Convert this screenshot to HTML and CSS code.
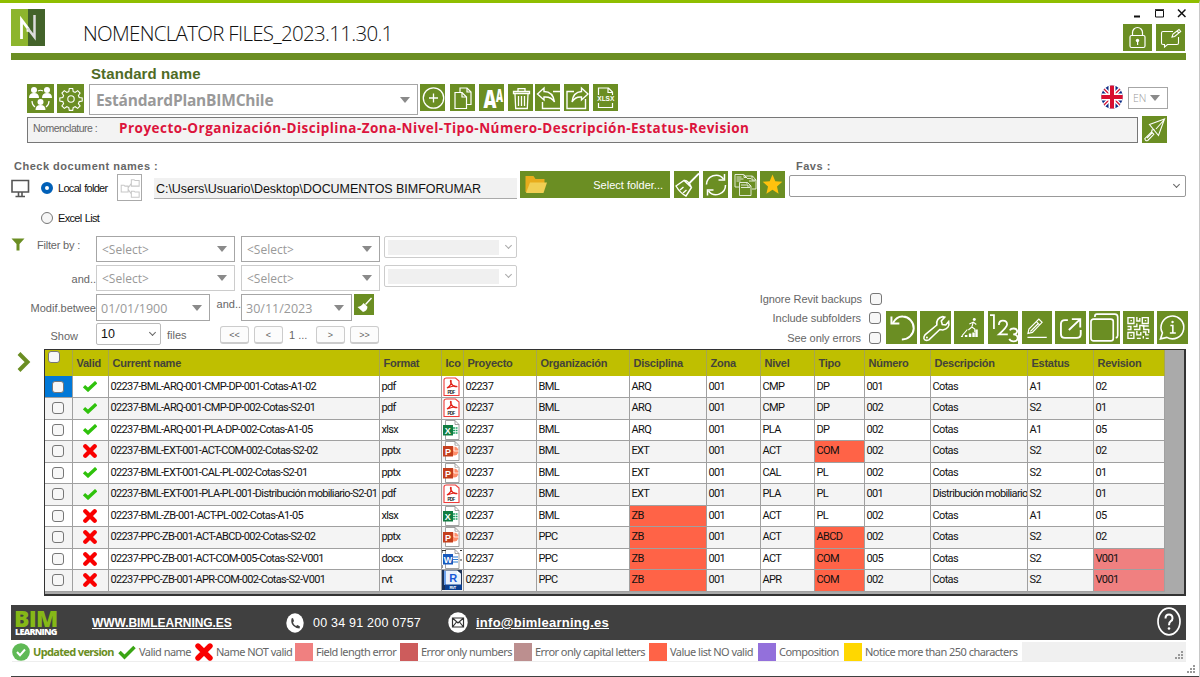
FILE: index.html
```html
<!DOCTYPE html>
<html lang="en">
<head>
    <meta charset="UTF-8">
    <meta name="viewport" content="width=device-width, initial-scale=1.0">
    <title>Nomenclator Files</title>
    <link rel="stylesheet" href="styles.css">
</head>
<body>
    <svg class="sprite" width="0" height="0">
        <symbol id="i-team" viewBox="0 0 27 29">
            <g fill="#fff"><circle cx="7" cy="6" r="3"/><path d="M2 14q0-5 5-5t5 5z"/><circle cx="20" cy="6" r="3"/><path d="M15 14q0-5 5-5t5 5z"/><circle cx="13.500" cy="18" r="3"/><path d="M8.500 26q0-5 5-5t5 5z"/></g>
            <path d="M11 7q2.500-1.500 5 0M5 17q0 4 3 6M22 17q0 4-3 6" fill="none" stroke="#fff" stroke-width="1.200"/>
        </symbol>
        <symbol id="i-gear" viewBox="0 0 27 29">
            <g fill="none" stroke="#fff" stroke-width="1.100"><circle cx="14" cy="15" r="3.200"/>
            <path d="M12.300 4.500h3.400l.5 3 2 .9 2.500-1.800 2.400 2.400-1.700 2.500.8 2 3 .5v3l-3 .6-.8 2 1.700 2.400-2.400 2.400-2.500-1.700-2 .9-.5 2.800h-3.400l-.5-2.800-2-.9-2.500 1.700-2.400-2.400 1.700-2.400-.8-2-3-.6v-3l3-.5.8-2-1.700-2.500 2.400-2.400 2.500 1.800 2-.9z"/></g>
        </symbol>
        <symbol id="i-plus" viewBox="0 0 25 27">
            <g fill="none" stroke="#fff" stroke-width="1.300"><circle cx="13.500" cy="14" r="10.200"/><path d="M13.500 9.500v9M9 14h9"/></g>
        </symbol>
        <symbol id="i-copy" viewBox="0 0 25 27">
            <g fill="none" stroke="#fff" stroke-width="1.200"><path d="M10 8.500V4h7l4 4v12.500h-4"/><path d="M17 4v4h4"/><path d="M5 8.500h7l4.500 4.500v11.500H5z"/><path d="M12 8.500V13h4.500"/></g>
        </symbol>
        <symbol id="i-font" viewBox="0 0 25 27">
            <text x="4.500" y="23.500" class="glyph-big" textLength="13" lengthAdjust="spacingAndGlyphs">A</text><text x="17" y="17.500" class="glyph-small" textLength="7" lengthAdjust="spacingAndGlyphs">A</text>
        </symbol>
        <symbol id="i-trash" viewBox="0 0 25 27">
            <g fill="none" stroke="#fff" stroke-width="1.300"><path d="M5.500 7.500h16v2h-16zM10 7V4.700h7V7M7 10l.7 14.500h11.600L20 10"/><path d="M10.500 12v10M13.500 12v10M16.500 12v10"/></g>
        </symbol>
        <symbol id="i-import" viewBox="0 0 25 27">
            <g fill="none" stroke="#fff" stroke-width="1.400"><path d="M2.500 10 9 4v3.500q9 0 10.500 10.500-3-5.500-10.500-5V16z"/><path d="M18 7.500h7M7.500 18v6.500H25"/></g>
        </symbol>
        <symbol id="i-export" viewBox="0 0 25 27">
            <g fill="none" stroke="#fff" stroke-width="1.400"><path d="M24 10 17.500 4v3.500Q9 8 8 18q3-5.500 9.500-5V16z"/><path d="M10 7.500H3v17h18.500V15"/></g>
        </symbol>
        <symbol id="i-xlsx" viewBox="0 0 25 27">
            <path d="M5.500 11V4h10l4 4v3M5.500 19v4.500h14V19M15 4v4.500h4.500" fill="none" stroke="#fff" stroke-width="1.200"/>
            <text x="4.300" y="17.200" class="glyph-xlsx">XLSX</text>
        </symbol>
        <symbol id="i-trowel" viewBox="0 0 25 27">
            <g fill="none" stroke="#fff" stroke-width="1.100"><path d="M22.500 3 7.500 8.500l9 11zM12.500 13.500l-2.500.5-.5 3M22 4l-8 9"/><path d="m9.500 16 2.300 2.300-6 6.200q-2.500.8-3-1.800z"/><path d="m5 22 5-5"/></g>
        </symbol>
        <symbol id="i-tree" viewBox="0 0 25 27">
            <g fill="none" stroke="#c8c8c8" stroke-width="1.100"><path d="M3.500 11h3l1 1H11v6.500H3.500zM14.500 5h3l1 1H23v6h-8.500zM14.500 17.500h3l1 1H23v5.500h-8.500zM11 14l3.500-5M11 15.500l3.500 5"/></g>
        </symbol>
        <symbol id="i-broom" viewBox="0 0 25 27">
            <g fill="none" stroke="#fff" stroke-width="1.400"><path d="M25 2.500 14.500 13" stroke-width="1.800"/><path d="M10 9.500q4-1 7.500 7M2 15l8-5.500 7.500 7-5.500 8.500q-6-3-10-10z"/><path d="m6 19 3.500-3M9 22l3.500-3"/></g>
        </symbol>
        <symbol id="i-refresh" viewBox="0 0 25 27">
            <g fill="none" stroke="#fff" stroke-width="1.500"><path d="M3.500 13.500A9.500 9.500 0 0 1 20.500 8M22.500 14A9.500 9.500 0 0 1 5.500 20"/><path d="M21.500 3v6h-6M4.500 24.500V19h6"/></g>
        </symbol>
        <symbol id="i-files" viewBox="0 0 25 27">
            <g fill="none" stroke="#fff" stroke-width=".8"><path d="M7 16H3V3.500h8.500l3 3M12 3.500v3h3M13 5h7.500l3.500 4v9h-4M20 5v4h4"/><path d="M7.500 11.500h8l3.500 3.500v9.500H7.500z" fill="#6b8e23"/><path d="M15 11.500V15h4M4.500 6h5M4.500 8h7M4.500 10h4M15 7.500h4M17 10h6M9 14h5M9 16.500h9"/></g>
        </symbol>
        <symbol id="i-star" viewBox="0 0 25 27">
            <path d="m12.500 3.500 2.800 6.700 7 .6-5.300 4.700 1.600 7.200-6.100-3.900-6.100 3.900L8 15.500l-5.300-4.700 7-.6z" fill="#ffc20e"/>
        </symbol>
        <symbol id="i-sweep" viewBox="0 0 20 21">
            <path d="m17.500 4-6 6.500" stroke="#fff" stroke-width="1.400"/><path d="m9.500 9 4 3.800q-.3 4.200-4.500 5.200L3.500 13q4-.5 6-4z" fill="#fff"/>
        </symbol>
        <symbol id="i-lock" viewBox="0 0 29 27">
            <g fill="none" stroke="#fff" stroke-width="1.200"><rect x="7" y="11.500" width="15" height="12" rx="1.500"/><path d="M9.500 11.500V8.500a5 5 0 0 1 10 0v3"/></g><circle cx="14.500" cy="16.500" r="1.700" fill="#fff"/><path d="M14 17h1.200v4H14z" fill="#fff"/>
        </symbol>
        <symbol id="i-comment" viewBox="0 0 29 27">
            <g fill="none" stroke="#fff" stroke-width="1.100"><path d="M17 7.500H7Q5.500 7.500 5.500 9v10q0 1.500 1.500 1.500h1.500V23l3-2.500H21q1.500 0 1.500-1.500v-6"/><path d="m16 13 1-3 6-4.500 1.700 2-6 5zM21 7l2 2"/></g>
        </symbol>
        <symbol id="i-undo" viewBox="0 0 31 33">
            <path d="M7 12Q11 5 17 5.500A11.500 11.500 0 0 1 16 28.500" fill="none" stroke="#fff" stroke-width="2"/><path d="M5.500 5.500v7h8" fill="none" stroke="#fff" stroke-width="2"/>
        </symbol>
        <symbol id="i-wrench" viewBox="0 0 31 33">
            <path d="M5 24 17 14Q16 7 23 5.500l2 .5-3.500 4 1 3.500 3.500.5 3-3.500q1.500 7-6 8.500l-3-.5L9 29q-4 1.500-5-1.500-.3-2 1-3.500z" fill="none" stroke="#fff" stroke-width="1.600"/><circle cx="7" cy="26.500" r="1" fill="#fff"/>
        </symbol>
        <symbol id="i-career" viewBox="0 0 31 33">
            <circle cx="20.500" cy="8.500" r="1.500" fill="#fff"/><path d="m15.500 13 4-2 3 2.500M19.500 11l-1.500 5 3 2v3M18 16l-3.500 3M8 25l5.500-6.500" fill="none" stroke="#fff" stroke-width="1.100"/><path d="M11 24h2.500v2H11zm4-1.500h2.500V26H15zm3.500-1H21V26h-2.500zm3-3H24V26h-2.500zM7 25h2v1H7z" fill="#fff"/>
        </symbol>
        <symbol id="i-123" viewBox="0 0 31 33">
            <path d="M2 4h4v14M11 14q0-4.500 4-4.500 4.300 0 4.300 4 0 2.500-8.300 10H20M22 19.500q1-2 4-2t3.500 2.500q0 3-4 3.500 4.500 0 4.500 4-.5 3-4 3t-4.500-2.500" fill="none" stroke="#fff" stroke-width="1.800"/>
        </symbol>
        <symbol id="i-edit" viewBox="0 0 31 33">
            <g fill="none" stroke="#fff" stroke-width="1.200"><path d="m6 22.500 1-4.500L17 8l3.300 3.300L10.500 21.500zM14.500 10.500l3.300 3.300M8.500 20.500l8-8"/><path d="M5.500 26.500H25"/></g>
        </symbol>
        <symbol id="i-open" viewBox="0 0 31 33">
            <path d="M13 9H10q-4 0-4 4v10q0 4 4 4h12q4 0 4-4v-4M17 8h8.500v8.500M25 8.500 14 19" fill="none" stroke="#fff" stroke-width="1.900"/>
        </symbol>
        <symbol id="i-stack" viewBox="0 0 31 33">
            <g fill="none" stroke="#fff" stroke-width="1.700"><rect x="2" y="8" width="22.500" height="22" rx="2.500"/><path d="M6 6V5q0-2 2-2h18q3 0 3 3v18.500q0 2-2 2.500"/></g>
        </symbol>
        <symbol id="i-qr" viewBox="0 0 31 33">
            <g fill="none" stroke="#fff" stroke-width="1.400"><path d="M5 6.500h6v6H5zM19.500 6.500h6v6h-6zM5 21.500h6v6H5z"/><path d="M7.500 9.500h1.500M22 9.500h1.500M7.500 24.500H9M14 6v4h3V7M14 12.500v3h-3.500M4.500 15.500H8v3H4.500M11 18.500h6v-4h4v4h5M19.500 15h6.500M14 20v4h4v-3M14 27.500h4M20 21h3v3h3M20.500 27.500V25M23 27.500h3M26 18v4"/></g>
        </symbol>
        <symbol id="i-info" viewBox="0 0 31 33">
            <path d="M5.500 22A11.500 11.500 0 1 1 10 26.500L3.500 28z" fill="none" stroke="#fff" stroke-width="1.600"/><path d="M13.500 14.500H16V22m-3 0h6" fill="none" stroke="#fff" stroke-width="1.600"/><circle cx="15.700" cy="11" r="1.200" fill="#fff"/>
        </symbol>
        <symbol id="i-check" viewBox="0 0 14 11"><path d="m1 5.200 4 3.600 8.200-7.600" fill="none" stroke="#2fc20c" stroke-width="3.400"/></symbol>
        <symbol id="i-cross" viewBox="0 0 14 14"><path d="m2.300 2.300 9.400 9.400M11.700 2.300l-9.400 9.400" fill="none" stroke="#f90000" stroke-width="4.300" stroke-linecap="round"/></symbol>
        <symbol id="i-pdf" viewBox="0 0 20 20">
            <path d="M4.500 1h9L17 4v14.500H2V3q0-2 2.500-2z" fill="#fff" stroke="#ef3b39" stroke-width="1.100"/><path d="M5 11q5-3 4-7.500Q8 3 9 6q2 4 5.500 3.500Q13 8 5 11z" fill="none" stroke="#e2231a" stroke-width="1.300"/><text x="5.500" y="16.800" class="glyph-tag">PDF</text>
        </symbol>
        <symbol id="i-paper" viewBox="0 0 20 20"><path d="M3.500.5H13l4 4v15H3.500zM13 .5v4h4" fill="#fff" stroke="#8a8a8a" stroke-width=".8"/></symbol>
        <symbol id="i-xls" viewBox="0 0 20 20"><use href="#i-paper"/><path d="M11 8h4.500M11 10.500h4.500M11 13h4.500" stroke="#21a366" stroke-width="1.400" stroke-dasharray="2 .6"/><path d="M1 5h10v10.500H1z" fill="#107c41"/><text x="2.700" y="13.500" class="glyph-doc">X</text></symbol>
        <symbol id="i-ppt" viewBox="0 0 20 20"><use href="#i-paper"/><circle cx="12" cy="10" r="4.500" fill="#ff8f6b"/><path d="M12 10V5h5M12 10h5" fill="none" stroke="#fff" stroke-width=".8"/><path d="M1 5h10v10.500H1z" fill="#c43e1c"/><text x="3" y="13.500" class="glyph-doc">P</text></symbol>
        <symbol id="i-doc" viewBox="0 0 20 20"><use href="#i-paper"/><path d="M11 8h5M11 10.500h5M11 13h5" stroke="#2b7cd3" stroke-width="1"/><path d="M1 5h10v10.500H1z" fill="#185abd"/><text x="1.700" y="13.500" class="glyph-doc">W</text><path d="M0 1.500h4M0 2v2M0 16v3M18 1.500h2M18 11h2" stroke="#333" stroke-width="1"/></symbol>
        <symbol id="i-rvt" viewBox="0 0 20 20"><path d="M0 0h20v20H0z" fill="#1c3358"/><path d="M2 .5h13L19 4v11H2z" fill="#e9f1fc"/><path d="M15 .5 19 4h-4z" fill="#fff"/><path d="M2 1h2v14H2z" fill="#6ea3ee"/><path d="M3 14.500h17V20H3z" fill="#0b3f91"/><text x="7.200" y="11.800" class="glyph-rvt">R</text><text x="7.500" y="18.700" class="glyph-rvt-tag">RVT</text></symbol>
        <symbol id="i-grip" viewBox="0 0 10 10"><path d="M7 1h2v2H7zM4 4h2v2H4zM7 4h2v2H7zM1 7h2v2H1zM4 7h2v2H4zM7 7h2v2H7z" fill="#999"/></symbol>
    </svg>

    <div class="window">
        <header class="titlebar">
            <svg class="logo" viewBox="0 0 34 37"><path d="M0 0h17v37H0z" fill="#8db52d"/><path d="M17 0h17v37H17z" fill="#43632a"/><path d="M10.500 30V11L17 19.500v3.300" fill="none" stroke="#fff" stroke-width="2.800"/><path d="M16.500 19 23.500 28V6" fill="none" stroke="#dcdcdc" stroke-width="2.500"/></svg>
            <h1>NOMENCLATOR FILES_2023.11.30.1</h1>
            <div class="title-right">
                <div class="win-controls">
                    <svg viewBox="0 0 54 12" width="54" height="12"><path d="M2 9.500h6" stroke="#111" stroke-width="2"/><path d="M23.500 3.500h8v6.500h-8zM23 2.700h9" fill="none" stroke="#111"/><path d="m46 2.500 7.500 7.500M53.500 2.500 46 10" stroke="#111" stroke-width="1.500"/></svg>
                </div>
                <div class="title-buttons">
                    <button class="ico wide"><svg><use href="#i-lock"/></svg></button>
                    <button class="ico wide"><svg><use href="#i-comment"/></svg></button>
                </div>
            </div>
        </header>

        <section class="standard">
            <h2>Standard name</h2>
            <div class="standard-row">
                <button class="ico tall"><svg><use href="#i-team"/></svg></button>
                <button class="ico tall"><svg><use href="#i-gear"/></svg></button>
                <div class="combo standard-combo"><span>EstándardPlanBIMChile</span><i class="tri"></i></div>
                <div class="tools">
                    <button class="ico"><svg><use href="#i-plus"/></svg></button>
                    <button class="ico"><svg><use href="#i-copy"/></svg></button>
                    <button class="ico"><svg><use href="#i-font"/></svg></button>
                    <button class="ico"><svg><use href="#i-trash"/></svg></button>
                    <button class="ico"><svg><use href="#i-import"/></svg></button>
                    <button class="ico"><svg><use href="#i-export"/></svg></button>
                    <button class="ico"><svg><use href="#i-xlsx"/></svg></button>
                </div>
                <svg class="flag" viewBox="0 0 22 24">
                    <clipPath id="round"><ellipse cx="11" cy="12" rx="10.700" ry="11.500"/></clipPath>
                    <g clip-path="url(#round)"><path d="M0 0h22v24H0z" fill="#0a2a84"/><path d="m0 1 22 22M22 1 0 23" stroke="#fff" stroke-width="4"/><path d="m0 1 22 22M22 1 0 23" stroke="#d80f30" stroke-width="1.300"/><path d="M11 0v24M0 12h22" stroke="#fff" stroke-width="7"/><path d="M11 0v24M0 12h22" stroke="#d80f30" stroke-width="4"/></g>
                </svg>
                <div class="combo lang"><span>EN</span><i class="tri"></i></div>
            </div>
            <div class="nomen-row">
                <div class="nomen"><label>Nomenclature :</label><strong>Proyecto-Organización-Disciplina-Zona-Nivel-Tipo-Número-Descripción-Estatus-Revision</strong></div>
                <button class="ico"><svg><use href="#i-trowel"/></svg></button>
            </div>
        </section>

        <section class="source">
            <div class="source-labels"><b class="lbl-check">Check document names :</b><b class="lbl-favs">Favs :</b></div>
            <div class="source-row">
                <svg class="monitor" viewBox="0 0 19 19"><path d="M1 1.500h16.500V13H1zM7.500 13v4M11 13v4M4.500 17.500H14" fill="none" stroke="#555" stroke-width="1.600"/></svg>
                <label class="radio local"><i class="dot on"></i><span>Local folder</span></label>
                <button class="tree"><svg><use href="#i-tree"/></svg></button>
                <div class="path">C:\Users\Usuario\Desktop\DOCUMENTOS BIMFORUMAR</div>
                <button class="folder-btn">
                    <svg viewBox="0 0 22 20" width="22" height="20"><path d="M.5 1h8l2 3h9v4l-3 9H.5z" fill="#e8ac1c"/><path d="M5 7.500h17L18.500 18H1z" fill="#f1cf53"/></svg>
                    <span>Select folder...</span>
                </button>
                <div class="source-tools">
                    <button class="ico"><svg><use href="#i-broom"/></svg></button>
                    <button class="ico"><svg><use href="#i-refresh"/></svg></button>
                    <button class="ico"><svg><use href="#i-files"/></svg></button>
                    <button class="ico"><svg><use href="#i-star"/></svg></button>
                </div>
                <div class="native favs"><i class="chev"></i></div>
            </div>
            <label class="radio excel"><i class="dot"></i><span>Excel List</span></label>
        </section>

        <section class="controls">
            <div class="filters">
                <svg class="funnel" viewBox="0 0 14 13"><path d="M.5.500h13L8.500 6v6.500H5.500V6z" fill="#6b8e23"/></svg>
                <div class="f-row">
                    <label class="w1">Filter by :</label>
                    <div class="combo sel"><span>&lt;Select&gt;</span><i class="tri"></i></div>
                    <div class="combo sel"><span>&lt;Select&gt;</span><i class="tri"></i></div>
                    <div class="native off"><i class="chev"></i></div>
                </div>
                <div class="f-row second">
                    <label class="w2">and..</label>
                    <div class="combo sel pale"><span>&lt;Select&gt;</span><i class="tri"></i></div>
                    <div class="combo sel pale"><span>&lt;Select&gt;</span><i class="tri"></i></div>
                    <div class="native off"><i class="chev"></i></div>
                </div>
                <div class="f-row dates">
                    <label class="w3">Modif.betwee</label>
                    <div class="combo date from"><span>01/01/1900</span><i class="tri"></i></div>
                    <label class="between">and..</label>
                    <div class="combo date to"><span>30/11/2023</span><i class="tri"></i></div>
                    <button class="sweep"><svg><use href="#i-sweep"/></svg></button>
                </div>
                <div class="f-row paging">
                    <label class="w4">Show</label>
                    <div class="native count"><span>10</span><i class="chev"></i></div>
                    <span class="files">files</span>
                    <button class="pg">&lt;&lt;</button>
                    <button class="pg">&lt;</button>
                    <span class="page">1 ...</span>
                    <button class="pg">&gt;</button>
                    <button class="pg">&gt;&gt;</button>
                </div>
            </div>
            <div class="options">
                <label>Ignore Revit backups<i class="box"></i></label>
                <label>Include subfolders<i class="box"></i></label>
                <label>See only errors<i class="box"></i></label>
            </div>
            <div class="actions">
                <button class="big"><svg><use href="#i-undo"/></svg></button>
                <button class="big"><svg><use href="#i-wrench"/></svg></button>
                <button class="big"><svg><use href="#i-career"/></svg></button>
                <button class="big"><svg><use href="#i-123"/></svg></button>
                <button class="big"><svg><use href="#i-edit"/></svg></button>
                <button class="big"><svg><use href="#i-open"/></svg></button>
                <button class="big"><svg><use href="#i-stack"/></svg></button>
                <button class="big"><svg><use href="#i-qr"/></svg></button>
                <button class="big"><svg><use href="#i-info"/></svg></button>
            </div>
        </section>

        <section class="results">
            <svg class="expand" viewBox="0 0 14 22"><path d="m2 2.500 8.500 8.500L2 19.500" fill="none" stroke="#6b8e23" stroke-width="4"/></svg>
            <div class="grid-box">
                <table id="files-table">
                    <colgroup>
                        <col class="c-sel"><col class="c-valid"><col class="c-name"><col class="c-format"><col class="c-ico"><col class="c-proy"><col class="c-org"><col class="c-disc"><col class="c-zona"><col class="c-nivel"><col class="c-tipo"><col class="c-num"><col class="c-desc"><col class="c-est"><col class="c-rev">
                    </colgroup>
                    <thead>
                        <tr>
                            <th class="sel-all"><i class="box"></i></th>
                            <th>Valid</th><th>Current name</th><th>Format</th><th>Ico</th><th>Proyecto</th><th>Organización</th><th>Disciplina</th><th>Zona</th><th>Nivel</th><th>Tipo</th><th>Número</th><th>Descripción</th><th>Estatus</th><th>Revision</th>
                        </tr>
                    </thead>
                    <tbody></tbody>
                </table>
            </div>
        </section>

        <footer class="contact">
            <div class="brand"><b>BIM</b><span>LEARNING</span></div>
            <a class="site">WWW.BIMLEARNING.ES</a>
            <svg class="round" viewBox="0 0 18 20"><ellipse cx="9" cy="10" rx="8.700" ry="9.700" fill="#fff"/><path d="M5.500 5.500q-1 5 2 7.500t6 2.500l.5-2-2.500-1.500-1.500 1q-2.500-1.500-3-3.500l1-1.500-1-3z" fill="#404040"/></svg>
            <span class="phone">00 34 91 200 0757</span>
            <svg class="round mail" viewBox="0 0 20 21"><ellipse cx="10" cy="10.500" rx="9.700" ry="10.200" fill="#fff"/><path d="M4.500 6h11v9h-11zl5.500 5 5.500-5M4.500 15l4-5M15.500 15l-4-5" fill="none" stroke="#333" stroke-width="1.200"/></svg>
            <a class="email">info@bimlearning.es</a>
            <svg class="help" viewBox="0 0 24 29"><ellipse cx="12" cy="14.500" rx="11" ry="13.300" fill="none" stroke="#fff" stroke-width="1.700"/><path d="M8.500 11.500q0-4 3.500-4t3.500 3.700q0 2-1.700 3-1.800 1.200-1.800 4" fill="none" stroke="#fff" stroke-width="2"/><circle cx="12" cy="21.500" r="1.300" fill="#fff"/></svg>
        </footer>

        <div class="legend">
            <div class="key updated"><svg viewBox="0 0 18 18"><circle cx="9" cy="9" r="8.800" fill="#5fb955"/><path d="m5 9 3 3.200L13 6.500" fill="none" stroke="#fff" stroke-width="2"/></svg>Updated version</div>
            <div class="key"><svg viewBox="0 0 18 18"><path d="m1.500 9 5 5L16.500 4" fill="none" stroke="#3aa514" stroke-width="3.500"/></svg>Valid name</div>
            <div class="key"><svg viewBox="0 0 18 18"><path d="m3 3 12 12M15 3 3 15" stroke="#f90000" stroke-width="5.400" stroke-linecap="round"/></svg>Name NOT valid</div>
            <div class="key"><i class="length"></i>Field length error</div>
            <div class="key"><i class="numbers"></i>Error only numbers</div>
            <div class="key"><i class="capitals"></i>Error only capital letters</div>
            <div class="key"><i class="list"></i>Value list NO valid</div>
            <div class="key"><i class="composition"></i>Composition</div>
            <div class="key"><i class="notice"></i>Notice more than 250 characters</div>
            <div class="rest"><svg class="grip"><use href="#i-grip"/></svg></div>
        </div>
        <div class="bottom"><svg class="grip"><use href="#i-grip"/></svg></div>
    </div>

    <script>
        const icons = { pdf: 'i-pdf', xlsx: 'i-xls', pptx: 'i-ppt', docx: 'i-doc', rvt: 'i-rvt' };

        // valid, format, file name, then the name fields; "!" = value not in list, "#" = wrong length
        const files = [
            [1, 'pdf', '02237-BML-ARQ-001-CMP-DP-001-Cotas-A1-02', '02237|BML|ARQ|001|CMP|DP|001|Cotas|A1|02'],
            [1, 'pdf', '02237-BML-ARQ-001-CMP-DP-002-Cotas-S2-01', '02237|BML|ARQ|001|CMP|DP|002|Cotas|S2|01'],
            [1, 'xlsx', '02237-BML-ARQ-001-PLA-DP-002-Cotas-A1-05', '02237|BML|ARQ|001|PLA|DP|002|Cotas|A1|05'],
            [0, 'pptx', '02237-BML-EXT-001-ACT-COM-002-Cotas-S2-02', '02237|BML|EXT|001|ACT|!COM|002|Cotas|S2|02'],
            [1, 'pptx', '02237-BML-EXT-001-CAL-PL-002-Cotas-S2-01', '02237|BML|EXT|001|CAL|PL|002|Cotas|S2|01'],
            [1, 'pdf', '02237-BML-EXT-001-PLA-PL-001-Distribución mobiliario-S2-01', '02237|BML|EXT|001|PLA|PL|001|Distribución mobiliario|S2|01'],
            [0, 'xlsx', '02237-BML-ZB-001-ACT-PL-002-Cotas-A1-05', '02237|BML|!ZB|001|ACT|PL|002|Cotas|A1|05'],
            [0, 'pptx', '02237-PPC-ZB-001-ACT-ABCD-002-Cotas-S2-02', '02237|PPC|!ZB|001|ACT|!ABCD|002|Cotas|S2|02'],
            [0, 'docx', '02237-PPC-ZB-001-ACT-COM-005-Cotas-S2-V001', '02237|PPC|!ZB|001|ACT|!COM|005|Cotas|S2|#V001'],
            [0, 'rvt', '02237-PPC-ZB-001-APR-COM-002-Cotas-S2-V001', '02237|PPC|!ZB|001|APR|!COM|002|Cotas|S2|#V001']
        ];

        const tbody = document.querySelector('#files-table tbody');
        files.forEach(([valid, format, name, fields], i) => {
            const row = tbody.insertRow();
            const mark = valid ? 'check' : 'cross';
            const cells = fields.split('|').map(f => {
                const cls = f[0] === '!' ? 'bad-list' : f[0] === '#' ? 'bad-length' : '';
                return `<td class="${cls}">${f.replace(/^[!#]/, '')}</td>`;
            });
            row.innerHTML = `<td class="pick${i === 0 ? ' current' : ''}"><i class="box"></i></td>
                <td class="mark"><svg class="${mark}"><use href="#i-${mark}"/></svg></td>
                <td>${name}</td><td>${format}</td>
                <td class="type"><svg><use href="#${icons[format]}"/></svg></td>` + cells.join('');
        });
    </script>
</body>
</html>
```
FILE: styles.css
```css
* { box-sizing: border-box; }
body { margin: 0; background: #fff; color: #666; font-family: "Liberation Sans", Arial, sans-serif; font-size: 11px; overflow: hidden; }
h1, h2 { margin: 0; }
button { padding: 0; border: none; font: inherit; color: inherit; }
svg { display: block; }
i { font-style: normal; }
.sprite { display: none; }
.window { width: 1200px; height: 677px; border-top: 3px solid #8fbe00; border-right: 1px solid #c8c8c8; display: flex; flex-direction: column; }

/* icon buttons */
.ico { flex: none; width: 25px; height: 27px; background: #6b8e23; }
.ico.tall { width: 27px; height: 29px; }
.ico.wide { width: 29px; }
.ico svg, .tree svg, .sweep svg, .big svg { width: 100%; height: 100%; }
.glyph-big { font: 800 24px "Open Sans", sans-serif; fill: #fff; }
.glyph-small { font: 800 17px "Open Sans", sans-serif; fill: #fff; }
.glyph-xlsx { font: bold 6.5px "Liberation Sans", sans-serif; fill: #fff; }
.glyph-tag { font: bold 4.5px "Liberation Sans", sans-serif; fill: #222; }
.glyph-doc { font: bold 9px "Liberation Sans", sans-serif; fill: #fff; }
.glyph-rvt { font: bold 11px "Liberation Sans", sans-serif; fill: #1858d6; }
.glyph-rvt-tag { font: bold 4px "Liberation Sans", sans-serif; fill: #fff; }

/* title */
.titlebar { height: 57px; margin: 0 13px 0 11px; border-bottom: 7px solid #6b8e23; display: flex; }
.logo { width: 34px; height: 37px; margin-top: 6px; }
h1 { margin: 16px 0 0 38px; font: 300 20.5px/28px "Open Sans", sans-serif; color: #111; letter-spacing: -0.7px; }
.title-right { margin-left: auto; }
.win-controls { height: 21px; padding: 4px 0 0 9px; }
.title-buttons { display: flex; gap: 4px; }

/* combos */
.combo { border: 1px solid #a6a6a6; background: #fff; display: flex; align-items: center; justify-content: space-between; color: #999; font-family: "Open Sans", sans-serif; }
.tri { border: 5px solid transparent; border-top: 6px solid #8a8a8a; border-bottom: 0; }
.native { border: 1px solid #999; border-radius: 2px; background: #fff; display: flex; align-items: center; justify-content: flex-end; }
.chev { width: 5px; height: 5px; border: solid #666; border-width: 0 1px 1px 0; transform: rotate(45deg); margin: -3px 6px 0 0; }

/* standard */
.standard { height: 84px; padding: 5px 0 0 27px; }
h2 { height: 19px; margin-left: 64px; font: bold 15px/17px "Liberation Sans", sans-serif; color: #4f6b25; letter-spacing: .1px; }
.standard-row { display: flex; height: 33px; }
.standard-row .tall + .tall { margin-left: 3px; }
.standard-combo { width: 329px; height: 31px; margin-left: 5px; padding: 0 7px 0 6px; font-weight: bold; font-size: 15.5px; letter-spacing: -0.2px; }
.tools { display: flex; margin-left: 2px; gap: 4px; }
.tools .ico:nth-child(2) { margin-left: 1px; }
.tools .ico:nth-child(5) { margin-left: -2px; }
.flag { width: 22px; height: 24px; margin: 1px 0 0 483px; }
.lang { width: 40px; height: 22px; margin: 3px 0 0 5px; padding: 0 7px 0 4px; font-size: 10.5px; font-weight: 300; }
.nomen-row { display: flex; gap: 4px; }
.nomen { width: 1111px; height: 26px; border: 1px solid #777; background: #f3f3f3; display: flex; line-height: 20px; }
.nomen label { width: 86px; margin-left: 5px; font-size: 10.5px; letter-spacing: -0.5px; }
.nomen strong { font: bold 13.5px/21px "Open Sans", sans-serif; color: #dc143c; letter-spacing: .47px; }
.nomen-row .ico { margin-top: -1px; }

/* source */
.source { height: 85px; padding-top: 15px; color: #111; }
.source-labels { display: flex; height: 12px; font-size: 11px; line-height: 14px; color: #666; letter-spacing: .5px; }
.lbl-check { width: 782px; margin-left: 14px; }
.source-row { display: flex; height: 32px; }
.monitor { width: 19px; height: 19px; margin: 8px 0 0 11px; }
.radio { display: flex; align-items: center; gap: 5px; font-size: 11px; letter-spacing: -0.7px; word-spacing: 1px; }
.dot { width: 12px; height: 12px; border: 1px solid #777; border-radius: 50%; background: #f6f6f6; }
.dot.on { border: 4px solid #0060b8; background: #fff; }
.local { width: 76px; height: 20px; margin: 7px 0 0 11px; }
.excel { margin: 5px 0 0 41px; height: 20px; }
.tree { width: 25px; height: 27px; margin-top: 3px; background: #fff; border: 1px solid #aaa; }
.path { width: 363px; height: 21px; margin: 7px 0 0 12px; padding-left: 2px; background: #f1f1f1; border: solid #aaa; border-width: 0 0 1px; font-size: 12.5px; letter-spacing: -0.04px; line-height: 22px; white-space: nowrap; }
.folder-btn { width: 150px; height: 27px; margin-left: 3px; padding: 0 7px 0 5px; background: #6b8e23; color: #fff; display: flex; align-items: center; justify-content: space-between; font-size: 11px; }
.source-tools { display: flex; gap: 3.800px; margin-left: 4px; }
.favs { width: 397px; height: 22px; margin: 4px 0 0 4px; }

/* filters */
.controls { height: 120px; padding-top: 7px; display: flex; color: #666; }
.filters { width: 520px; position: relative; }
.funnel { position: absolute; left: 11px; top: 2px; width: 14px; height: 13px; }
.f-row { display: flex; height: 29px; }
.f-row label { text-align: right; flex: none; }
.w1 { width: 96px; padding: 3px 16px 0 0; letter-spacing: -0.2px; }
.f-row .w2 { width: 96px; padding-top: 8px; }
.f-row .w3 { width: 96px; padding-top: 8px; }
.w4 { width: 96px; padding: 7px 18px 0 0; }
.sel { width: 139px; height: 26px; padding: 0 7px 0 5px; margin-right: 6px; font-size: 12px; }
.sel + .native { margin-left: -2px; }
.pale { border-color: #ccc; }
.off { width: 133px; height: 22px; border-color: #ccc; background: linear-gradient(#f0f0f0, #f0f0f0) 3px 3px / 111px 15px no-repeat #fff; }
.off .chev { border-color: #aaa; margin-right: 5px; }
.date { height: 27px; padding: 0 7px 0 4px; font-size: 12.5px; }
.date span { padding-top: 2px; }
.from { width: 114px; }
.between { width: 31px; padding-top: 4px; }
.to { width: 111px; }
.sweep { width: 20px; height: 21px; margin-left: 2px; background: #6b8e23; }
.count { width: 65px; height: 22px; border-color: #bbb; justify-content: space-between; padding-left: 4px; color: #111; font-size: 12.5px; }
.count .chev { margin-right: 5px; }
.files { width: 59px; padding: 6px 0 0 6px; }
.pg { width: 29px; height: 18px; margin: 3px 5px 0 0; border: 1px solid #ccc; border-bottom-width: 2px; border-radius: 3px; background: #fcfcfc; font-size: 9px; line-height: 14px; }
.page { width: 28px; padding: 6px 0 0 1px; }

/* options */
.options { width: 363px; padding-top: 53px; text-align: right; }
.options label { display: flex; justify-content: flex-end; align-items: center; height: 19.5px; font-size: 11px; line-height: 18px; letter-spacing: -0.05px; gap: 8px; }
.options .box { margin-right: 1px; }
.options label + label .box { margin-right: 2px; }
.box { flex: none; width: 12px; height: 12px; border: 1px solid #777; border-radius: 3px; background: #f7f7f7; display: inline-block; }
.actions { display: flex; gap: 3.200px; margin: 75px 0 0 3px; height: 33px; }
.big { width: 30.700px; height: 33px; background: #6b8e23; }

/* results */
.results { display: flex; height: 256px; }
.expand { width: 14px; height: 22px; margin: 2px 13px 0 17px; }
.grid-box { width: 1142px; height: 247px; border: 1px solid #333; border-width: 1px 2px 2px 1px; background: #aaa; }
table { width: 1119px; border-collapse: collapse; table-layout: fixed; }
th { height: 26px; padding: 0 4px; background: #bfbf00; border-right: 1px solid #a6a650; color: #44443a; text-align: left; font-size: 11px; letter-spacing: -0.25px; white-space: nowrap; overflow: hidden; }
td { height: 21.500px; padding: 0 2px; border: solid #a0a0a0; border-width: 0 1px 1px 0; background: #fff; color: #111; font: 11px/18px Roboto, sans-serif; letter-spacing: -0.65px; white-space: nowrap; overflow: hidden; }
tr:nth-child(even) td { background: #f4f4f4; }
td.bad-list, tr:nth-child(even) td.bad-list { background: #ff6347; }
td.bad-length, tr:nth-child(even) td.bad-length { background: #f08080; }
.sel-all { vertical-align: top; padding: 1px 3px; }
td.pick, td.mark, td.type { padding: 0; text-align: center; line-height: 0; }
tr td.pick.current { background: #0078d7; }
.check { width: 14px; height: 11px; margin: 0 auto; }
.cross { width: 14px; height: 14px; margin: 0 auto; }
.type svg { width: 20px; height: 20px; }
.c-sel { width: 27px; }
.c-valid { width: 36px; }
.c-name { width: 271px; }
.c-format { width: 62px; }
.c-ico { width: 22px; }
.c-proy { width: 73px; }
.c-org { width: 93px; }
.c-disc { width: 77px; }
.c-zona { width: 54px; }
.c-nivel { width: 54px; }
.c-tipo { width: 50px; }
.c-num { width: 66px; }
.c-desc { width: 97px; }
.c-est { width: 66px; }
.c-rev { width: 71px; }

/* footer */
.contact { height: 35px; margin: 0 13px 0 11px; background: #404040; color: #fff; display: flex; align-items: center; }
.brand { width: 81px; padding-left: 3px; font-family: "Open Sans", sans-serif; font-weight: 800; }
.brand b { display: block; font-size: 23px; line-height: 18px; color: #86b817; letter-spacing: -0.8px; }
.brand span { display: block; font-size: 9px; line-height: 10px; letter-spacing: -0.75px; padding-left: 1px; }
.contact a { font-weight: bold; font-size: 12.5px; text-decoration: underline; }
.contact .site { width: 194px; font-size: 12px; letter-spacing: -0.05px; }
.round { width: 18px; height: 20px; }
.phone { width: 144px; padding-left: 9px; font-size: 12.5px; letter-spacing: .22px; }
.mail { width: 20px; height: 21px; }
.contact .email { margin-left: 8px; font-size: 13px; letter-spacing: .25px; }
.help { width: 24px; height: 29px; margin: -3px 5px 0 auto; }

/* legend */
.legend { display: grid; grid-template-columns: 106px 77px 100px 105px 114px 135px 109px 86px 178px auto; width: 1174px; height: 20px; margin: 2px 0 0 12px; background: #fff; border-bottom: 1px solid #eee; }
.key { display: flex; align-items: center; gap: 3px; font: 11px/18px "Noto Sans", sans-serif; letter-spacing: -0.53px; white-space: nowrap; }
.key svg, .key i { flex: none; width: 18px; height: 18px; }
.updated { font-weight: bold; letter-spacing: -0.65px; color: #6b8e23; }
.length { background: #f08080; }
.numbers { background: #cd5c5c; }
.capitals { background: #bc8f8f; }
.list { background: #ff6347; }
.composition { background: #9370db; }
.notice { background: #ffd700; }
.rest { background: #f0f0f0; padding: 8px 2px 0 0; }
.grip { width: 10px; height: 10px; margin-left: auto; }
.bottom { height: 15px; margin-left: 11px; padding: 2px 3px 0 0; border-bottom: 1px solid #404040; }
```
